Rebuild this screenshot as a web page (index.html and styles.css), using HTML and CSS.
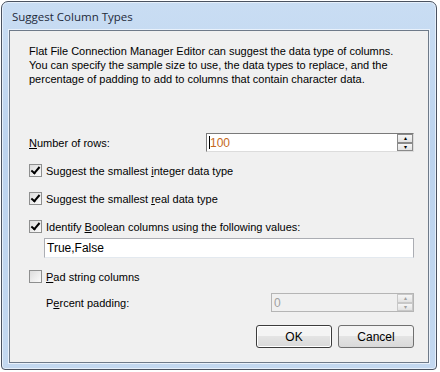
FILE: index.html
```html
<!DOCTYPE html>
<html lang="en">
<head>
    <meta charset="UTF-8">
    <title>Suggest Column Types</title>
    <link rel="stylesheet" href="styles.css">
</head>
<body>
    <div class="window">
        <div class="titlebar">Suggest Column Types</div>
        <div class="client">
            <p class="intro">Flat File Connection Manager Editor can suggest the data type of columns.<br>
                You can specify the sample size to use, the data types to replace, and the<br>
                percentage of padding to add to columns that contain character data.</p>

            <!-- Number of rows -->
            <div class="field-row rows-row">
                <label class="field-label"><u>N</u>umber of rows:</label>
                <div class="spin spin-wide">
                    <span class="spin-value"><span class="caret"></span>100</span>
                    <div class="spin-buttons">
                        <span class="spin-btn">&#9652;</span>
                        <span class="spin-btn">&#9662;</span>
                    </div>
                </div>
            </div>

            <div class="check-row first">
                <span class="checkbox checked"></span>
                <span>Suggest the smallest <u>i</u>nteger data type</span>
            </div>
            <div class="check-row">
                <span class="checkbox checked"></span>
                <span>Suggest the smallest <u>r</u>eal data type</span>
            </div>
            <div class="check-row">
                <span class="checkbox checked"></span>
                <span>Identify <u>B</u>oolean columns using the following values:</span>
            </div>
            <div class="textbox">True,False</div>

            <div class="check-row pad-row">
                <span class="checkbox"></span>
                <span><u>P</u>ad string columns</span>
            </div>
            <div class="field-row percent-row">
                <label class="field-label">P<u>e</u>rcent padding:</label>
                <div class="spin spin-narrow disabled">
                    <span class="spin-value">0</span>
                    <div class="spin-buttons">
                        <span class="spin-btn">&#9652;</span>
                        <span class="spin-btn">&#9662;</span>
                    </div>
                </div>
            </div>

            <div class="buttons">
                <button class="btn default">OK</button>
                <button class="btn">Cancel</button>
            </div>
        </div>
    </div>
</body>
</html>
```

FILE: styles.css
```css
body {
    margin: 0;
    background: #ffffff;
    font-family: "Liberation Sans", Arial, sans-serif;
    font-size: 11px;
    color: #000;
}

.window {
    width: 436px;
    height: 369px;
    margin: 1px 0 0 1px;
    border: 1px solid #4a5260;
    border-radius: 7px 7px 4px 4px;
    background: linear-gradient(#c9ddf3, #bcd3ee 40%, #c3d8f0);
    box-shadow: inset 0 0 0 1px #e6f0fb;
    padding: 0 7px 6px 7px;
    box-sizing: border-box;
    display: flex;
    flex-direction: column;
}

.titlebar {
    height: 28px;
    line-height: 30px;
    padding-left: 3px;
    font-family: "Open Sans", "Liberation Sans", sans-serif;
    font-size: 11.5px;
    color: #1e2a3a;
}

.client {
    flex: 1;
    background: #f0f0f0;
    border: 1px solid #6e7a89;
    box-shadow: 0 0 0 1px #e9f1fb;
    padding: 0 14px 0 19px;
    display: flex;
    flex-direction: column;
}

.intro {
    margin: 13px 0 0 0;
    line-height: 14px;
    white-space: nowrap;
}

.field-row {
    display: flex;
    align-items: center;
}

.rows-row {
    margin-top: 47px;
}

.field-label {
    flex: 1;
}

.spin {
    height: 19px;
    box-sizing: border-box;
    border: 1px solid #7a7a7a;
    border-right-color: #dcdcdc;
    border-bottom-color: #dcdcdc;
    background: #fff;
    display: flex;
    align-items: center;
}

.spin-wide {
    width: 208px;
}

.spin-narrow {
    width: 143px;
}

.spin-value {
    flex: 1;
    padding-left: 2px;
    color: #c4681b;
    font-size: 12px;
    display: flex;
    align-items: center;
}

.caret {
    width: 1px;
    height: 13px;
    background: #000;
}

.spin-buttons {
    width: 16px;
    height: 17px;
    display: flex;
    flex-direction: column;
}

.spin-btn {
    flex: 1;
    border: 1px solid #8a8a8a;
    background: linear-gradient(#f6f6f6, #e2e2e2);
    font-size: 6px;
    line-height: 6px;
    text-align: center;
    color: #000;
}

.disabled {
    background: #f0f0f0;
    border-color: #b5b5b5;
}

.disabled .spin-value {
    color: #a0a0a0;
}

.disabled .spin-btn {
    border-color: #c8c8c8;
    color: #a0a0a0;
}

.check-row {
    display: flex;
    align-items: center;
    margin-top: 15px;
    height: 13px;
}

.check-row.first {
    margin-top: 12px;
}

.checkbox {
    width: 11px;
    height: 11px;
    border: 1px solid #8e8f8f;
    background: linear-gradient(135deg, #dcdcdc, #fbfbfb);
    margin-right: 4px;
    position: relative;
}

.checkbox.checked::after {
    content: "";
    position: absolute;
    left: 3px;
    top: 0px;
    width: 3px;
    height: 7px;
    border: solid #000;
    border-width: 0 2px 2px 0;
    transform: rotate(40deg);
}

.textbox {
    margin: 5px 0 0 15px;
    height: 20px;
    box-sizing: border-box;
    border: 1px solid #abadb3;
    border-bottom-color: #e3e9ef;
    background: #fff;
    padding-left: 2px;
    line-height: 18px;
    font-size: 12px;
}

.pad-row {
    margin-top: 12px;
}

.percent-row {
    margin-top: 10px;
    padding-left: 17px;
}

.buttons {
    display: flex;
    justify-content: flex-end;
    gap: 6px;
    margin-top: 13px;
}

.btn {
    width: 76px;
    height: 23px;
    font-family: "Liberation Sans", Arial, sans-serif;
    font-size: 12px;
    border: 1px solid #707070;
    border-radius: 3px;
    background: linear-gradient(#f4f4f4 50%, #e4e4e4 50%, #d9d9d9);
}

.btn.default {
    border-color: #3c3c3c;
    box-shadow: inset 0 0 0 1px #ffffff;
}

u {
    text-decoration: underline;
}
```
